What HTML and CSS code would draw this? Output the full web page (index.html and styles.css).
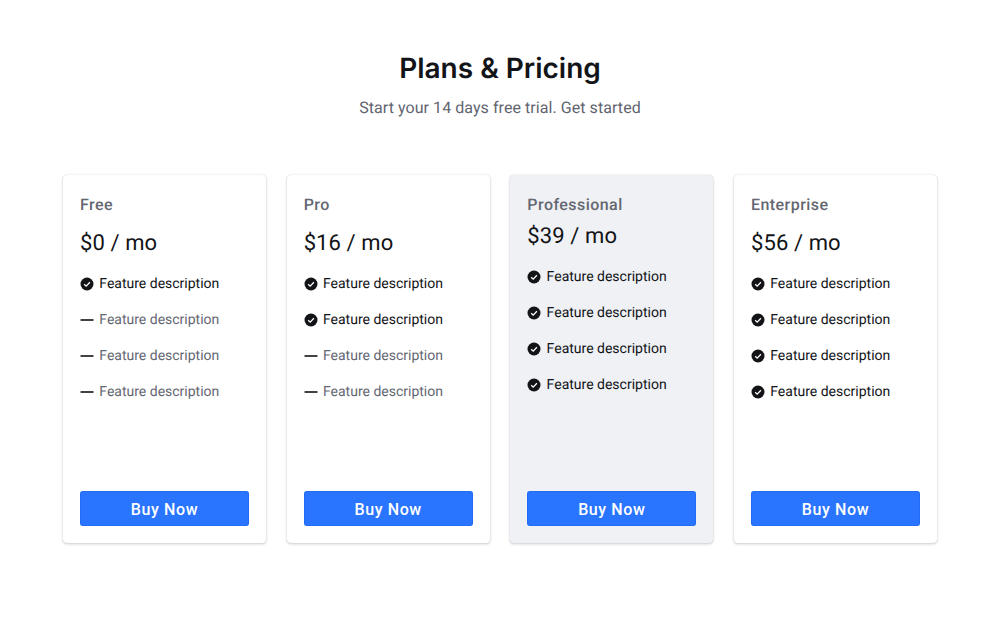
FILE: index.html
```html
<!DOCTYPE html>
<html lang="en">
<head>
<meta charset="utf-8">
<title>Plans &amp; Pricing</title>
<link rel="stylesheet" href="styles.css">
</head>
<body>
<svg class="defs" width="0" height="0" aria-hidden="true">
  <symbol id="check" viewBox="0 0 14 14">
    <circle cx="7" cy="7" r="6.5" fill="#121417"/>
    <path d="M4.2 7.2 6.2 9.1 9.9 5.2" fill="none" stroke="#fff" stroke-width="1.3"/>
  </symbol>
  <symbol id="dash" viewBox="0 0 14 14">
    <rect x="0.5" y="6.2" width="13" height="1.6" fill="#121417"/>
  </symbol>
</svg>
<main class="page">
  <header class="head">
    <h1 class="title">Plans &amp; Pricing</h1>
    <p class="subtitle">Start your 14 days free trial. Get started</p>
  </header>
  <section class="cards">
    <article class="card">
      <h2 class="plan">Free</h2>
      <p class="price">$0 / mo</p>
      <ul class="features">
        <li class="feature"><svg class="icon"><use href="#check"/></svg>Feature description</li>
        <li class="feature off"><svg class="icon"><use href="#dash"/></svg>Feature description</li>
        <li class="feature off"><svg class="icon"><use href="#dash"/></svg>Feature description</li>
        <li class="feature off"><svg class="icon"><use href="#dash"/></svg>Feature description</li>
      </ul>
      <button class="buy">Buy Now</button>
    </article>
    <article class="card">
      <h2 class="plan">Pro</h2>
      <p class="price">$16 / mo</p>
      <ul class="features">
        <li class="feature"><svg class="icon"><use href="#check"/></svg>Feature description</li>
        <li class="feature"><svg class="icon"><use href="#check"/></svg>Feature description</li>
        <li class="feature off"><svg class="icon"><use href="#dash"/></svg>Feature description</li>
        <li class="feature off"><svg class="icon"><use href="#dash"/></svg>Feature description</li>
      </ul>
      <button class="buy">Buy Now</button>
    </article>
    <article class="card featured">
      <h2 class="plan">Professional</h2>
      <p class="price">$39 / mo</p>
      <ul class="features">
        <li class="feature"><svg class="icon"><use href="#check"/></svg>Feature description</li>
        <li class="feature"><svg class="icon"><use href="#check"/></svg>Feature description</li>
        <li class="feature"><svg class="icon"><use href="#check"/></svg>Feature description</li>
        <li class="feature"><svg class="icon"><use href="#check"/></svg>Feature description</li>
      </ul>
      <button class="buy">Buy Now</button>
    </article>
    <article class="card">
      <h2 class="plan">Enterprise</h2>
      <p class="price">$56 / mo</p>
      <ul class="features">
        <li class="feature"><svg class="icon"><use href="#check"/></svg>Feature description</li>
        <li class="feature"><svg class="icon"><use href="#check"/></svg>Feature description</li>
        <li class="feature"><svg class="icon"><use href="#check"/></svg>Feature description</li>
        <li class="feature"><svg class="icon"><use href="#check"/></svg>Feature description</li>
      </ul>
      <button class="buy">Buy Now</button>
    </article>
  </section>
</main>
</body>
</html>
```
FILE: styles.css
```css
* { box-sizing: border-box; }
html, body { margin: 0; height: 100%; background: #fff; }
body { font-family: Roboto, "Liberation Sans", sans-serif; color: #121417; text-rendering: geometricPrecision; }
.defs { position: absolute; }
.page { width: 1000px; height: 625px; padding: 52px 63px 0; overflow: hidden; }
.head { text-align: center; }
.title { margin: 0; font-family: Inter, sans-serif; font-size: 28px; line-height: 33px; font-weight: 600; color: #121417; }
.subtitle { margin: 13px 0 0; font-size: 16px; line-height: 20px; letter-spacing: 0.06px; color: #61646f; }
.cards { display: grid; grid-template-columns: repeat(4, 203px); column-gap: 20.67px; margin-top: 57px; }
.card { display: flex; flex-direction: column; height: 368px; padding: 19px 17px 17px; background: #fff; border-radius: 4px; box-shadow: 0 0 1px rgba(40,45,60,.18), 0 1px 3px rgba(40,45,60,.24); }
.featured { background: #eff1f5; }
.featured .price { margin-top: 7px; }
.plan { margin: 0; font-size: 16px; line-height: 22px; font-weight: 500; letter-spacing: 0.45px; color: #646772; }
.price { margin: 14px 0 0; font-size: 22px; line-height: 28px; font-weight: 400; letter-spacing: 0.1px; color: #121417; }
.features { list-style: none; margin: 8px 0 0; padding: 0; }
.feature { display: flex; align-items: center; gap: 5.3px; height: 36px; font-size: 14px; color: #121417; }
.off { color: #646772; }
.icon { width: 14px; height: 14px; flex: none; margin-bottom: 1px; }
.buy { margin-top: auto; height: 35px; padding: 1px 0 0; border: 0; border-radius: 3px; background: #2975ff; box-shadow: inset 0 0 0 1px rgba(20,90,220,.3); color: #fff; font-family: inherit; font-size: 16px; font-weight: 500; letter-spacing: 0.6px; }
```
